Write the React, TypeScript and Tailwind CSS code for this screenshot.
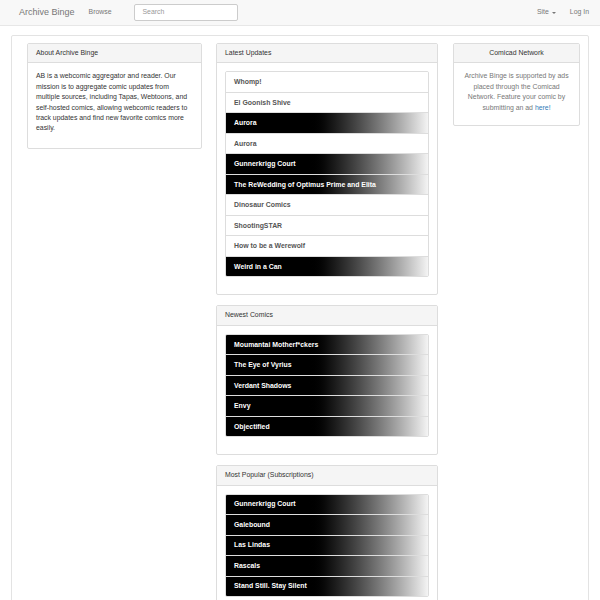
import * as React from 'react';

type Comic = { title: string; banner?: boolean };

const latest: Comic[] = [
  { title: 'Whomp!' },
  { title: 'El Goonish Shive' },
  { title: 'Aurora', banner: true },
  { title: 'Aurora' },
  { title: 'Gunnerkrigg Court', banner: true },
  { title: 'The ReWedding of Optimus Prime and Elita', banner: true },
  { title: 'Dinosaur Comics' },
  { title: 'ShootingSTAR' },
  { title: 'How to be a Werewolf' },
  { title: 'Weird in a Can', banner: true },
];

const newest: Comic[] = [
  { title: 'Moumantai Motherf*ckers', banner: true },
  { title: 'The Eye of Vyrius', banner: true },
  { title: 'Verdant Shadows', banner: true },
  { title: 'Envy', banner: true },
  { title: 'Objectified', banner: true },
];

const popular: Comic[] = [
  { title: 'Gunnerkrigg Court', banner: true },
  { title: 'Galebound', banner: true },
  { title: 'Las Lindas', banner: true },
  { title: 'Rascals', banner: true },
  { title: 'Stand Still. Stay Silent', banner: true },
];

function Panel({
  title,
  center,
  children,
}: {
  title: string;
  center?: boolean;
  children: React.ReactNode;
}) {
  return (
    <div className="mb-[10px] rounded-[2px] border border-[#ddd] bg-white">
      <div
        className={
          'rounded-t-[2px] border-b border-[#ddd] bg-[#f5f5f5] px-[8px] py-[4px] text-[#333] ' +
          (center ? 'text-center' : '')
        }
      >
        {title}
      </div>
      <div className="p-[8px]">{children}</div>
    </div>
  );
}

function ComicList({ items }: { items: Comic[] }) {
  return (
    <div className="mb-[9px] flex flex-col overflow-hidden rounded-[2px] border border-[#ddd]">
      {items.map((c, i) => (
        <a
          key={i}
          className={
            'block px-[8px] py-[4.75px] leading-[10px] font-bold ' +
            (i > 0 ? 'border-t border-[#ddd] ' : '') +
            (c.banner
              ? 'bg-linear-to-r from-black from-40% to-[#f4f4f4] text-white'
              : 'bg-white text-[#555]')
          }
        >
          {c.title}
        </a>
      ))}
    </div>
  );
}

export default function App() {
  return (
    <div className="min-h-[600px] bg-white font-['Liberation_Sans',Arial,sans-serif] text-[6.9px] leading-[10.4px] text-[#333]">
      {/* Navbar */}
      <nav className="flex h-[26px] items-center border-b border-[#e7e7e7] bg-[#f8f8f8] text-[#777]">
        <span className="ml-[19px] text-[9px]">Archive Binge</span>
        <span className="ml-[14px]">Browse</span>
        <div className="ml-[22px] flex h-[17px] w-[104px] items-center rounded-[2px] border border-[#ccc] bg-white px-[8px] text-[#999]">
          Search
        </div>
        <span className="ml-auto flex items-center gap-[3px]">
          Site
          <span className="inline-block h-0 w-0 border-x-[2px] border-t-[2px] border-x-transparent border-t-[#777]" />
        </span>
        <span className="ml-[14px] mr-[11px]">Log In</span>
      </nav>

      {/* Main well */}
      <div className="mx-[11px] mt-[9px] flex gap-[14px] rounded-[2px] border border-[#e3e3e3] px-[15px] pt-[7px]">
        <div className="w-[175px] shrink-0">
          <Panel title="About Archive Binge">
            <p className="pb-[6px]">
              AB is a webcomic aggregator and reader. Our mission is to aggregate comic updates from
              multiple sources, including Tapas, Webtoons, and self-hosted comics, allowing webcomic
              readers to track updates and find new favorite comics more easily.
            </p>
          </Panel>
        </div>

        <div className="w-[222px] shrink-0">
          <Panel title="Latest Updates">
            <ComicList items={latest} />
          </Panel>
          <Panel title="Newest Comics">
            <ComicList items={newest} />
          </Panel>
          <Panel title="Most Popular (Subscriptions)">
            <ComicList items={popular} />
          </Panel>
        </div>

        <div className="ml-[1px] w-[127px] shrink-0">
          <Panel title="Comicad Network" center>
            <p className="px-[2px] pb-[4px] text-center text-[#777]">
              Archive Binge is supported by ads placed through the Comicad Network. Feature your
              comic by submitting an ad <a className="text-[#337ab7]">here!</a>
            </p>
          </Panel>
        </div>
      </div>
    </div>
  );
}
